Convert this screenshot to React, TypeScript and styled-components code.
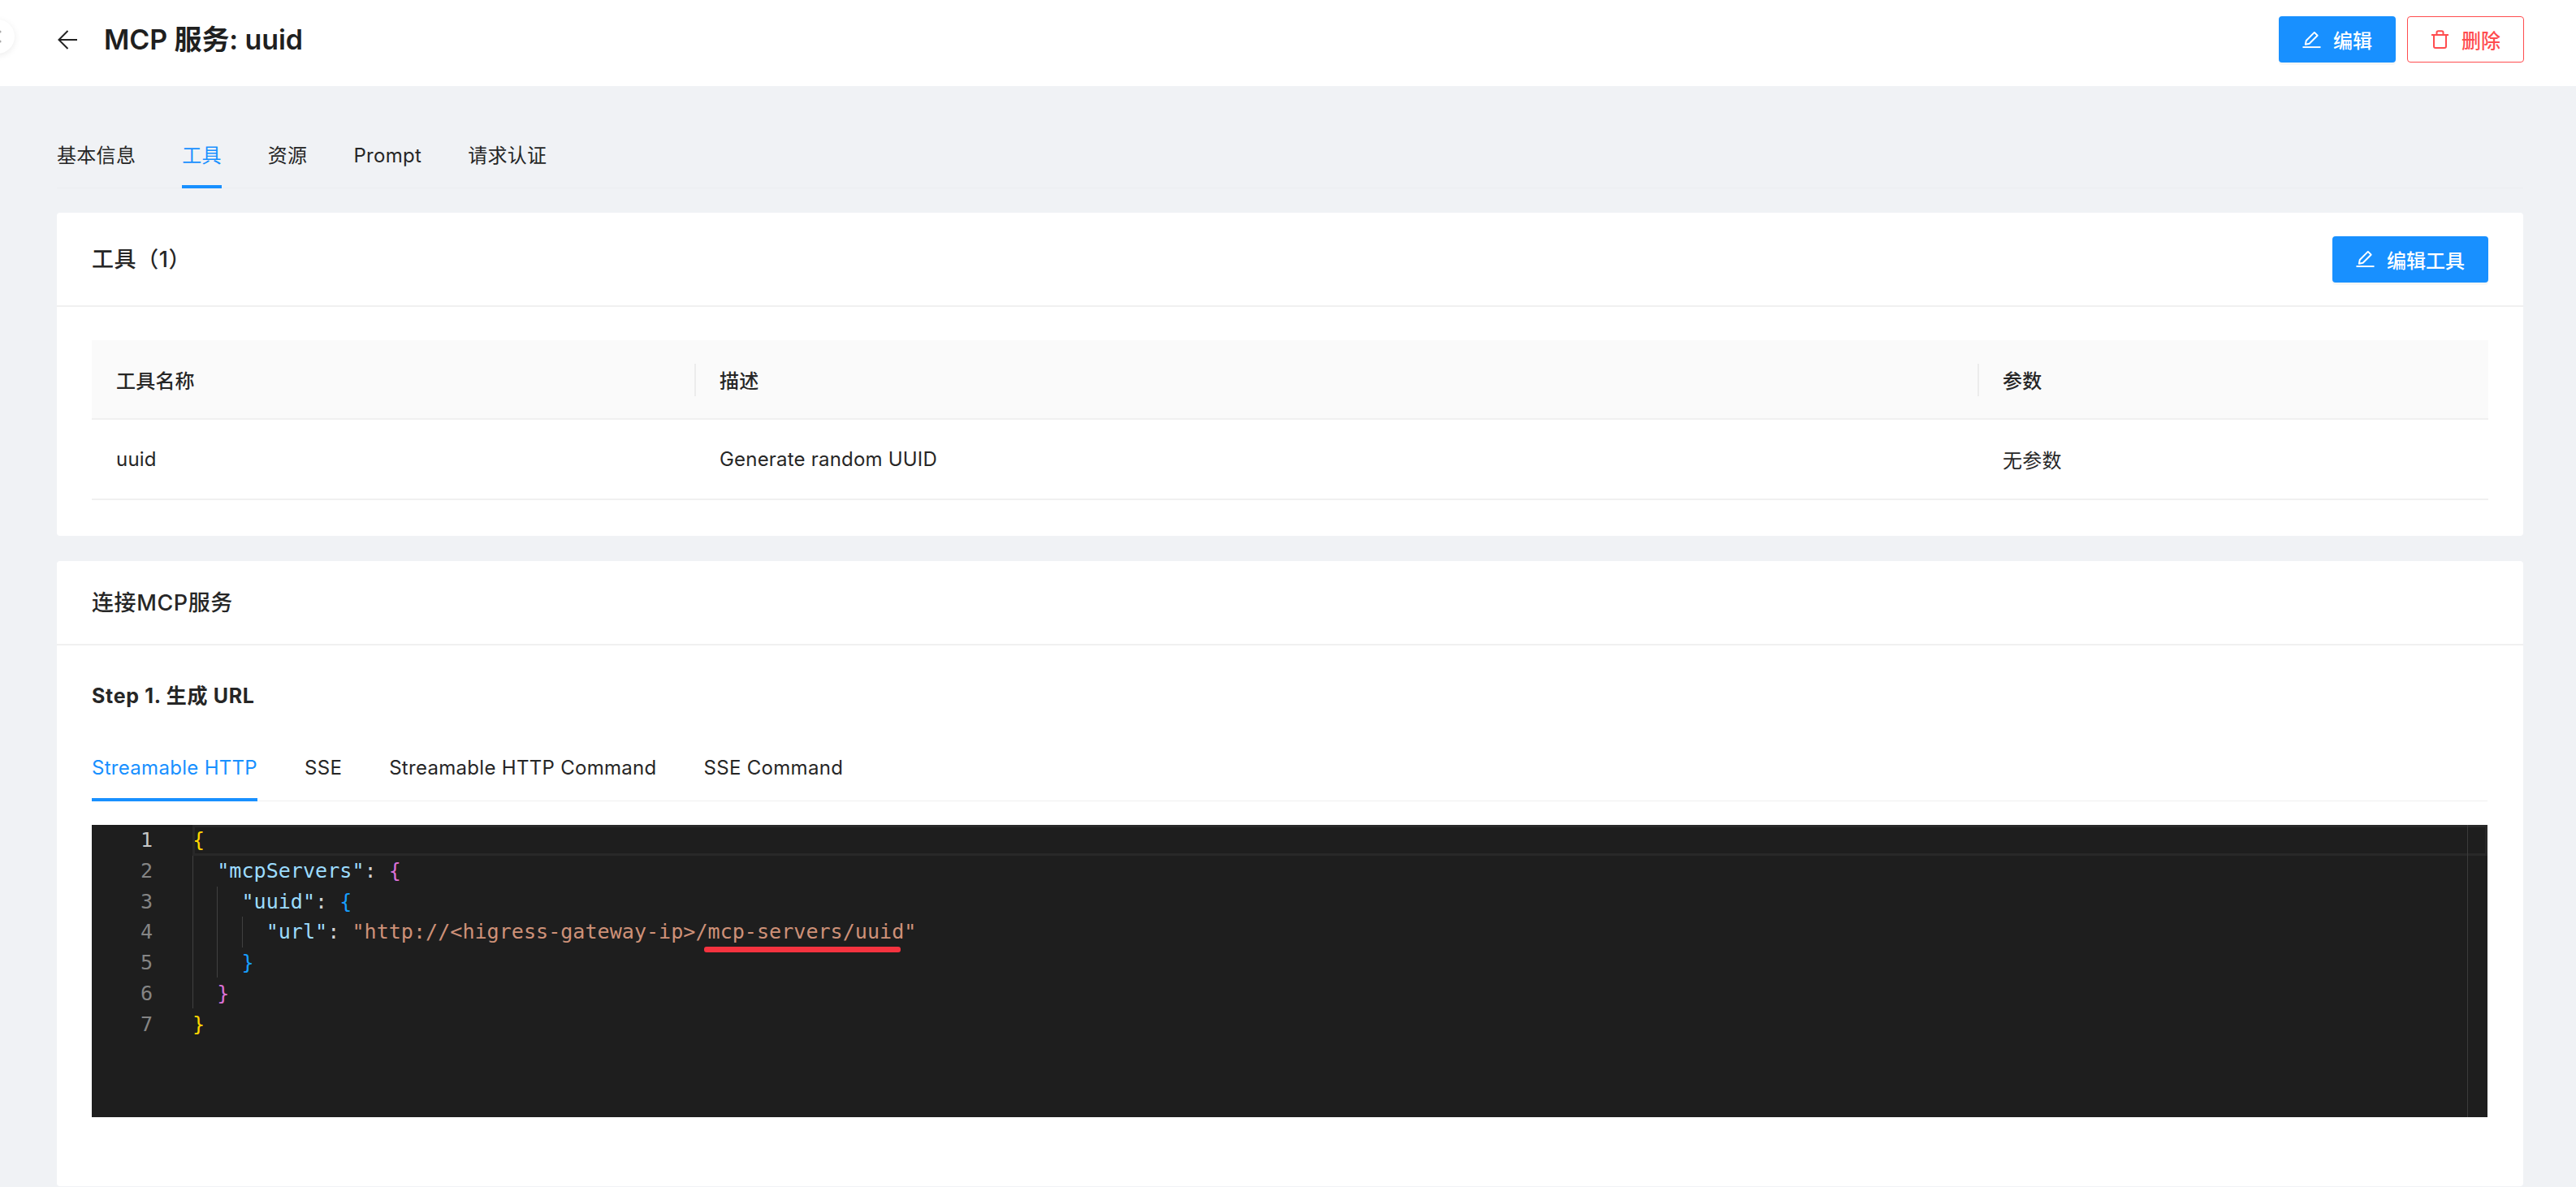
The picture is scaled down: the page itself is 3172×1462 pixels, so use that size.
import React from 'react';
import styled, { createGlobalStyle } from 'styled-components';

const GlobalStyle = createGlobalStyle`
  html, body {
    margin: 0;
    padding: 0;
    background: #f0f2f5;
    overflow: hidden;
  }
  body {
    font-family: Inter, "Noto Sans CJK SC", sans-serif;
    color: #262626;
  }
  * {
    box-sizing: border-box;
  }
`;

const Page = styled.div`
  position: relative;
  width: 3172px;
  height: 1462px;
  background: #f0f2f5;
`;

const CollapseHandle = styled.div`
  position: absolute;
  left: -24px;
  top: 24px;
  width: 42px;
  height: 42px;
  border-radius: 50%;
  background: #fff;
  box-shadow: 0 2px 8px rgba(0, 0, 0, 0.08);
  display: flex;
  align-items: center;
  justify-content: flex-end;
  padding-right: 16px;
`;

const Header = styled.header`
  height: 106px;
  background: #fff;
  display: flex;
  align-items: center;
  justify-content: space-between;
  padding: 0 64px 9px 70px;
`;

const HeaderLeft = styled.div`
  display: flex;
  align-items: center;
  gap: 32px;
`;

const PageTitle = styled.h1`
  margin: 0;
  font-size: 34px;
  line-height: 48px;
  letter-spacing: -0.1px;
  font-weight: 600;
  color: #1f1f1f;
`;

const HeaderActions = styled.div`
  display: flex;
  gap: 14px;
`;

const ActionButton = styled.button<{ $danger?: boolean }>`
  height: 57px;
  display: inline-flex;
  align-items: center;
  gap: 15px;
  padding: 0 ${(p) => (p.$danger ? 28 : 27)}px;
  font-family: inherit;
  font-size: 24px;
  font-weight: 500;
  border-radius: 4px;
  border: ${(p) => (p.$danger ? '1px solid #ff4d4f' : '2px solid #1890ff')};
  background: ${(p) => (p.$danger ? '#fff' : '#1890ff')};
  color: ${(p) => (p.$danger ? '#ff4d4f' : '#fff')};
  box-shadow: ${(p) => (p.$danger ? 'none' : '0 3px 0 rgba(0, 0, 0, 0.03)')};
`;

const Main = styled.main`
  padding: 70px 65px 0 70px;
`;

const TabBar = styled.div<{ $gap: number; $line: string }>`
  display: flex;
  gap: ${(p) => p.$gap}px;
  border-bottom: 1px solid ${(p) => p.$line};
`;

const Tab = styled.div<{ $active?: boolean; $pad: number }>`
  font-size: 24px;
  line-height: 32px;
  letter-spacing: 0.3px;
  margin-bottom: -1px;
  padding-bottom: ${(p) => p.$pad}px;
  border-bottom: 4px solid ${(p) => (p.$active ? '#1890ff' : 'transparent')};
  color: ${(p) => (p.$active ? '#1890ff' : '#262626')};
`;

const PageTabs = styled.div`
  margin-bottom: 30px;
`;

const Card = styled.section`
  background: #fff;
  border-radius: 4px;
  & + & {
    margin-top: 31px;
  }
`;

const CardHeader = styled.div<{ $height: number }>`
  height: ${(p) => p.$height}px;
  display: flex;
  align-items: center;
  justify-content: space-between;
  padding: 0 43px;
  border-bottom: 2px solid #f0f0f0;
`;

const CardTitle = styled.h2`
  margin: 0;
  padding-top: 2px;
  font-size: 27px;
  line-height: 36px;
  letter-spacing: 0.6px;
  font-weight: 500;
`;

const ToolsBody = styled.div`
  padding: 41px 43px 44px;
`;

const Row = styled.div<{ $head?: boolean }>`
  display: grid;
  grid-template-columns: 743px 1580px 1fr;
  height: ${(p) => (p.$head ? 98 : 99)}px;
  background: ${(p) => (p.$head ? '#fafafa' : '#fff')};
  border-bottom: 2px solid #f0f0f0;
  font-size: 24px;
  letter-spacing: 0.2px;
  font-weight: ${(p) => (p.$head ? 500 : 400)};
`;

const Cell = styled.div<{ $divider?: boolean }>`
  position: relative;
  display: flex;
  align-items: center;
  padding-left: 30px;
  &::before {
    content: '';
    display: ${(p) => (p.$divider ? 'block' : 'none')};
    position: absolute;
    left: -1px;
    top: 29px;
    height: 40px;
    width: 2px;
    background: #ececec;
  }
`;

const ConnectBody = styled.div`
  padding: 43px 44px 85px 43px;
`;

const StepTitle = styled.div`
  font-size: 25px;
  line-height: 36px;
  letter-spacing: 0.7px;
  font-weight: 700;
  margin-bottom: 56px;
  padding-top: 1px;
  height: 36px;
`;

const CodeTabs = styled.div`
  margin-bottom: 29px;
`;

const Editor = styled.div`
  position: relative;
  height: 360px;
  background: #1e1e1e;
  display: flex;
  font-family: "DejaVu Sans Mono", "Liberation Mono", monospace;
  font-size: 25.1px;
  line-height: 37.75px;
`;

const Gutter = styled.div`
  width: 124px;
  padding-right: 49px;
  text-align: right;
  flex-shrink: 0;
`;

const LineNumber = styled.div<{ $active?: boolean }>`
  color: ${(p) => (p.$active ? '#c6c6c6' : '#858585')};
`;

const Code = styled.div`
  white-space: pre;
  color: #d4d4d4;
`;

const CurrentLine = styled.div`
  position: absolute;
  left: 124px;
  right: 0;
  top: 0;
  height: 38px;
  border: 3px solid #282828;
`;

const IndentGuide = styled.div<{ $left: number; $top: number; $height: number }>`
  position: absolute;
  left: ${(p) => p.$left}px;
  top: ${(p) => p.$top}px;
  height: ${(p) => p.$height}px;
  width: 1px;
  background: #404040;
`;

const Ruler = styled.div`
  position: absolute;
  left: 2925px;
  top: 0;
  bottom: 0;
  width: 1px;
  background: #3c3c3c;
`;

const RedMark = styled.div`
  position: absolute;
  left: 754px;
  top: 150px;
  width: 242px;
  height: 7px;
  border-radius: 3px;
  background: #f5333f;
`;

const Key = styled.span`
  color: #9cdcfe;
`;

const Str = styled.span`
  color: #ce9178;
`;

const Brace = styled.span<{ $color: string }>`
  color: ${(p) => p.$color};
`;

const EditIcon = () => (
  <svg width="23" height="22" viewBox="0 0 24 22" fill="none" stroke="currentColor" strokeWidth="2">
    <path d="M4 17 L5 12 L15.5 1.5 L19.5 5.5 L9 16 Z" strokeLinejoin="round" />
    <path d="M0.5 20.5 H23.5" />
  </svg>
);

const TrashIcon = () => (
  <svg width="23" height="23" viewBox="0 0 22 23" fill="none" stroke="currentColor" strokeWidth="2">
    <path d="M0.5 6 H21.5" />
    <path d="M7 6 V3 Q7 1.2 9 1.2 H13 Q15 1.2 15 3 V6" />
    <path d="M3.5 6 V20 Q3.5 22 5.5 22 H16.5 Q18.5 22 18.5 20 V6" />
  </svg>
);

const BackIcon = () => (
  <svg width="26" height="24" viewBox="0 0 26 24" fill="none" stroke="#222" strokeWidth="2">
    <path d="M25 12 H3" />
    <path d="M13.5 1 L2.5 12 L13.5 23" />
  </svg>
);

const YELLOW = '#ffd700';
const MAGENTA = '#da70d6';
const BLUE = '#179fff';

const App: React.FC = () => {
  const pageTabs = ['基本信息', '工具', '资源', 'Prompt', '请求认证'];
  const codeTabs = ['Streamable HTTP', 'SSE', 'Streamable HTTP Command', 'SSE Command'];

  return (
    <Page>
      <GlobalStyle />
      <CollapseHandle>
        <svg width="4" height="16" viewBox="0 0 4 16" fill="#a8a8a8">
          <circle cx="2" cy="2" r="1.6" />
          <circle cx="2" cy="14" r="1.6" />
        </svg>
      </CollapseHandle>
      <Header>
        <HeaderLeft>
          <BackIcon />
          <PageTitle>MCP 服务: uuid</PageTitle>
        </HeaderLeft>
        <HeaderActions>
          <ActionButton>
            <EditIcon />
            编辑
          </ActionButton>
          <ActionButton $danger>
            <TrashIcon />
            删除
          </ActionButton>
        </HeaderActions>
      </Header>
      <Main>
        <PageTabs>
          <TabBar $gap={57} $line="#eceef1">
            {pageTabs.map((t) => (
              <Tab key={t} $pad={20} $active={t === '工具'}>
                {t}
              </Tab>
            ))}
          </TabBar>
        </PageTabs>

        <Card>
          <CardHeader $height={116}>
            <CardTitle>工具（1）</CardTitle>
            <ActionButton>
              <EditIcon />
              编辑工具
            </ActionButton>
          </CardHeader>
          <ToolsBody>
            <Row $head>
              <Cell>工具名称</Cell>
              <Cell $divider>描述</Cell>
              <Cell $divider>参数</Cell>
            </Row>
            <Row>
              <Cell>uuid</Cell>
              <Cell>Generate random UUID</Cell>
              <Cell>无参数</Cell>
            </Row>
          </ToolsBody>
        </Card>

        <Card>
          <CardHeader $height={104}>
            <CardTitle>连接MCP服务</CardTitle>
          </CardHeader>
          <ConnectBody>
            <StepTitle>Step 1. 生成 URL</StepTitle>
            <CodeTabs>
              <TabBar $gap={58} $line="#f0f0f0">
                {codeTabs.map((t) => (
                  <Tab key={t} $pad={21} $active={t === 'Streamable HTTP'}>
                    {t}
                  </Tab>
                ))}
              </TabBar>
            </CodeTabs>
            <Editor>
              <Gutter>
                {[1, 2, 3, 4, 5, 6, 7].map((n) => (
                  <LineNumber key={n} $active={n === 1}>
                    {n}
                  </LineNumber>
                ))}
              </Gutter>
              <Code>
                <div><Brace $color={YELLOW}>{'{'}</Brace></div>
                <div>{'  '}<Key>"mcpServers"</Key>: <Brace $color={MAGENTA}>{'{'}</Brace></div>
                <div>{'    '}<Key>"uuid"</Key>: <Brace $color={BLUE}>{'{'}</Brace></div>
                <div>{'      '}<Key>"url"</Key>: <Str>"http://&lt;higress-gateway-ip&gt;/mcp-servers/uuid"</Str></div>
                <div>{'    '}<Brace $color={BLUE}>{'}'}</Brace></div>
                <div>{'  '}<Brace $color={MAGENTA}>{'}'}</Brace></div>
                <div><Brace $color={YELLOW}>{'}'}</Brace></div>
              </Code>
              <CurrentLine />
              <IndentGuide $left={124} $top={38} $height={188} />
              <IndentGuide $left={154} $top={76} $height={112} />
              <IndentGuide $left={185} $top={113} $height={38} />
              <Ruler />
              <RedMark />
            </Editor>
          </ConnectBody>
        </Card>
      </Main>
    </Page>
  );
};

export default App;
